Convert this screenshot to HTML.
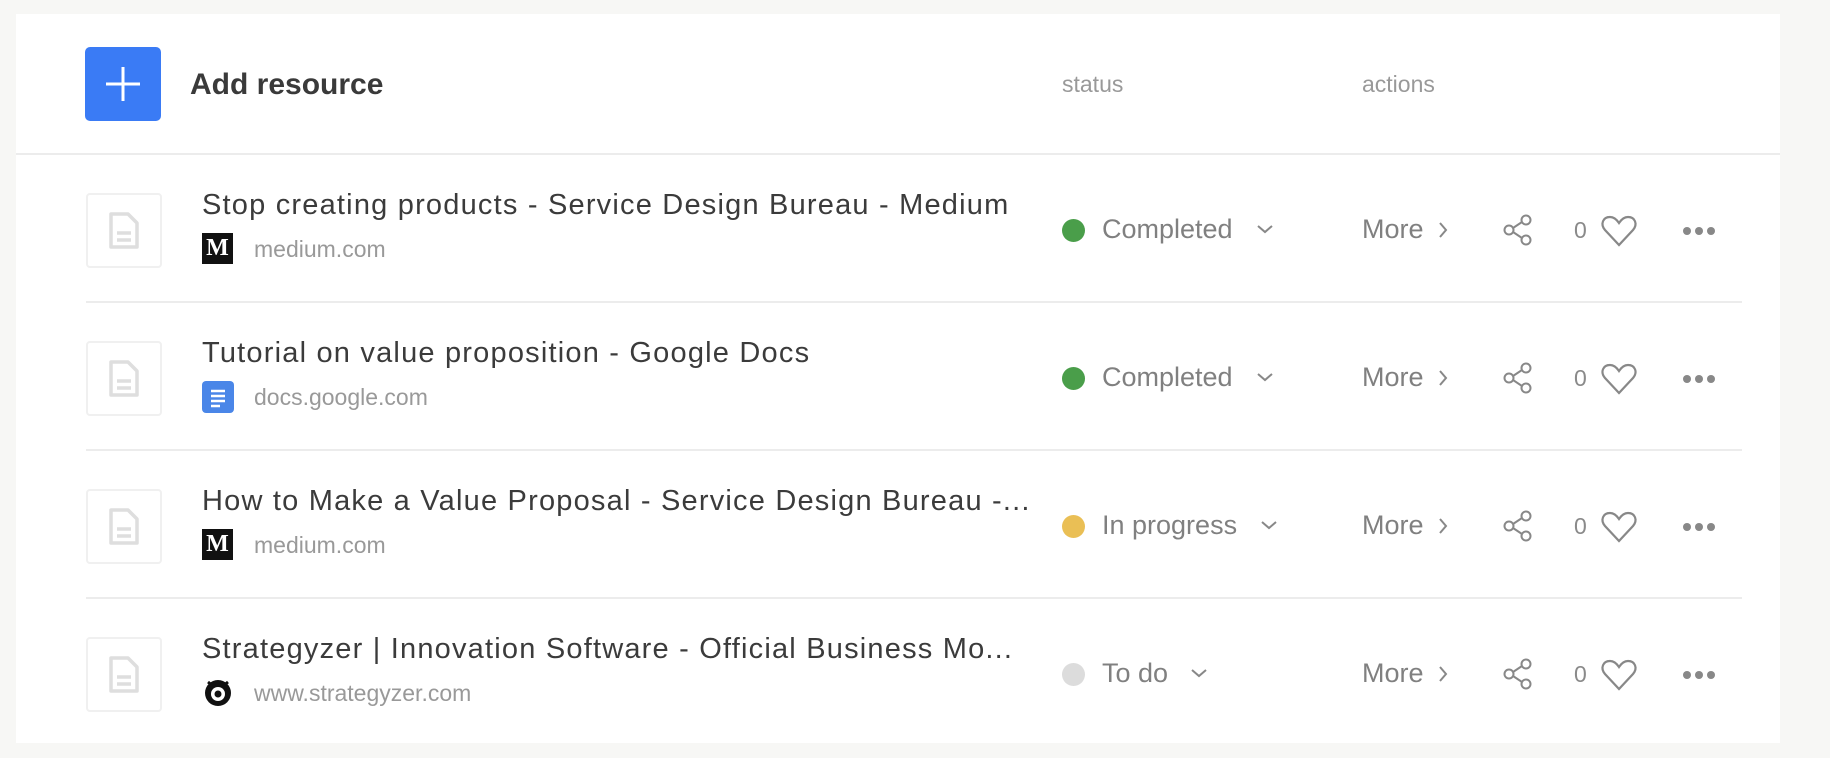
<!DOCTYPE html>
<html><head><meta charset="utf-8"><style>
*{margin:0;padding:0;box-sizing:border-box}
body{width:1830px;height:758px;background:#f7f7f5;font-family:"Liberation Sans",Roboto,sans-serif;position:relative;overflow:hidden}
.card{position:absolute;left:16px;top:14px;width:1764px;height:729px;background:#fff}
.abs{position:absolute}
.plus{left:85px;top:47px;width:76px;height:74px;background:#3a7bf5;border-radius:5px}
.hdr{font-size:23px;color:#999;top:71px}
.sep{height:2px;background:#ececec}
.doc{width:76px;height:75px;border:2px solid #f0f0f0;border-radius:4px}
.title{font-size:29px;letter-spacing:1.2px;color:#3b3b3b;white-space:nowrap}
.dom{font-size:23px;color:#999}
.fav{width:31px;height:31px}
.dot{width:23px;height:23px;border-radius:50%}
.st{font-size:27px;color:#808080}
.g{color:#8a8a8a}
</style></head><body>
<div class="card"></div>
<div class="abs plus"><svg width="76" height="74"><path d="M38 20V54M21 37H55" stroke="#fff" stroke-width="3"/></svg></div>
<div class="abs" style="left:190px;top:68px;font-size:30px;font-weight:bold;color:#3a3a3a">Add resource</div>
<div class="abs hdr" style="left:1062px">status</div>
<div class="abs hdr" style="left:1362px">actions</div>
<div class="abs sep" style="left:16px;top:153px;width:1764px"></div>

<div id="rows"></div>
<script>
const rows=[
["Stop creating products - Service Design Bureau - Medium","medium.com","m","#4a9e4a","Completed"],
["Tutorial on value proposition - Google Docs","docs.google.com","d","#4a9e4a","Completed"],
["How to Make a Value Proposal - Service Design Bureau -...","medium.com","m","#eabf55","In progress"],
["Strategyzer | Innovation Software - Official Business Mo...","www.strategyzer.com","s","#dcdcdc","To do"]];
let h="";
rows.forEach((r,i)=>{
const c=230+i*148;
let fav="";
if(r[2]=="m")fav=`<div class="abs fav" style="left:202px;top:${c+3}px;background:#111;color:#fff;font-family:'Liberation Serif',serif;font-weight:bold;font-size:24px;text-align:center;line-height:31px">M</div>`;
else if(r[2]=="d")fav=`<svg class="abs" style="left:202px;top:${c+3}px" width="32" height="32"><rect width="32" height="32" rx="4" fill="#4a86e8"/><path d="M9 10H23M9 15H23M9 20H23M9 25H18" stroke="#fff" stroke-width="2.6"/></svg>`;
else fav=`<svg class="abs" style="left:202px;top:${c+3}px" width="32" height="32"><circle cx="16" cy="16" r="13" fill="#111"/><circle cx="16" cy="17" r="7" fill="#fff"/><circle cx="16" cy="17" r="3.5" fill="#111"/><path d="M6 5L11 9M26 5L21 9" stroke="#111" stroke-width="3"/></svg>`;
const sw=r[4]=="Completed"?1256:(r[4]=="In progress"?1260:1190);
h+=`<div class="abs doc" style="left:86px;top:${c-37}px"><svg width="72" height="71"><path d="M23 19H40L49 28V52H23Z" fill="none" stroke="#dedede" stroke-width="3.5" stroke-linejoin="round"/><path d="M29 38H43M29 45H43" stroke="#dedede" stroke-width="3.5"/></svg></div>
<div class="abs title" style="left:202px;top:${c-41}px">${r[0]}</div>
${fav}
<div class="abs dom" style="left:254px;top:${c+6}px">${r[1]}</div>
<div class="abs dot" style="left:1062px;top:${c-11}px;background:${r[3]}"></div>
<div class="abs st" style="left:1102px;top:${c-16}px">${r[4]}</div>
<svg class="abs" style="left:${sw}px;top:${c-7}px" width="18" height="12"><path d="M2 3L9 9L16 3" fill="none" stroke="#888" stroke-width="2"/></svg>
<div class="abs st" style="left:1362px;top:${c-16}px">More</div>
<svg class="abs" style="left:1437px;top:${c-10}px" width="12" height="20"><path d="M3 3L9 10L3 17" fill="none" stroke="#888" stroke-width="2"/></svg>
<svg class="abs" style="left:1501px;top:${c-17}px" width="34" height="34"><g fill="none" stroke="#888" stroke-width="2"><circle cx="8" cy="17" r="4.5"/><circle cx="25" cy="7" r="4.5"/><circle cx="25" cy="27" r="4.5"/><path d="M12 15L21 9M12 19L21 25"/></g></svg>
<div class="abs g" style="left:1574px;top:${c-13}px;font-size:23px">0</div>
<svg class="abs" style="left:1600px;top:${c-16}px" width="38" height="34"><path d="M19 31L5 16C0 10 3 3 10 3C14 3 17 6 19 9C21 6 24 3 28 3C35 3 38 10 33 16Z" fill="none" stroke="#888" stroke-width="2.2"/></svg>
<svg class="abs" style="left:1682px;top:${c-4}px" width="36" height="10"><g fill="#888"><circle cx="5" cy="5" r="4"/><circle cx="17" cy="5" r="4"/><circle cx="29" cy="5" r="4"/></g></svg>`;
if(i<3)h+=`<div class="abs sep" style="left:86px;top:${c+71}px;width:1656px"></div>`;
});
document.getElementById("rows").innerHTML=h;
</script>
</body></html>
